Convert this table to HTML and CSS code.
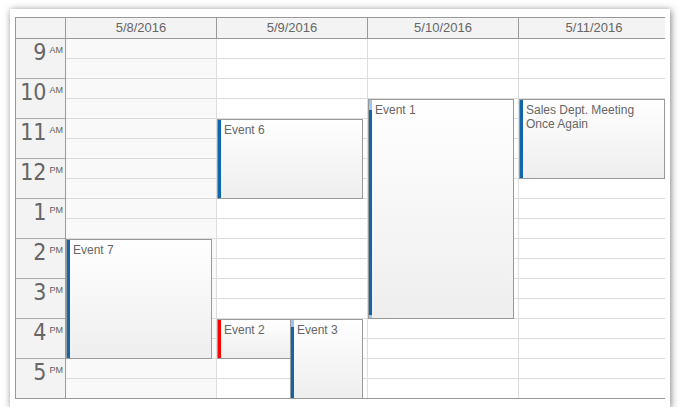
FILE: index.html
```html
<!DOCTYPE html>
<html>
<head>
<meta charset="utf-8">
<link rel="stylesheet" href="styles.css">
</head>
<body>
<div class="card">
  <div class="cal">
    <div class="head">
      <div class="corner"></div>
      <div class="dh">5/8/2016</div>
      <div class="dh">5/9/2016</div>
      <div class="dh">5/10/2016</div>
      <div class="dh">5/11/2016</div>
    </div>
    <div class="body">
      <div class="times">
        <div class="hour"><span class="num">9</span><span class="ap">AM</span></div>
        <div class="hour"><span class="num">10</span><span class="ap">AM</span></div>
        <div class="hour"><span class="num">11</span><span class="ap">AM</span></div>
        <div class="hour"><span class="num">12</span><span class="ap">PM</span></div>
        <div class="hour"><span class="num">1</span><span class="ap">PM</span></div>
        <div class="hour"><span class="num">2</span><span class="ap">PM</span></div>
        <div class="hour"><span class="num">3</span><span class="ap">PM</span></div>
        <div class="hour"><span class="num">4</span><span class="ap">PM</span></div>
        <div class="hour"><span class="num">5</span><span class="ap">PM</span></div>
      </div>
      <div class="col weekend">
        <div class="slot"></div><div class="slot"></div><div class="slot"></div><div class="slot"></div><div class="slot"></div><div class="slot"></div>
        <div class="slot"></div><div class="slot"></div><div class="slot"></div><div class="slot"></div><div class="slot"></div><div class="slot"></div>
        <div class="slot"></div><div class="slot"></div><div class="slot"></div><div class="slot"></div><div class="slot"></div><div class="slot"></div>
      </div>
      <div class="col">
        <div class="slot"></div><div class="slot"></div><div class="slot"></div><div class="slot"></div><div class="slot"></div><div class="slot"></div>
        <div class="slot"></div><div class="slot"></div><div class="slot"></div><div class="slot"></div><div class="slot"></div><div class="slot"></div>
        <div class="slot"></div><div class="slot"></div><div class="slot"></div><div class="slot"></div><div class="slot"></div><div class="slot"></div>
      </div>
      <div class="col">
        <div class="slot"></div><div class="slot"></div><div class="slot"></div><div class="slot"></div><div class="slot"></div><div class="slot"></div>
        <div class="slot"></div><div class="slot"></div><div class="slot"></div><div class="slot"></div><div class="slot"></div><div class="slot"></div>
        <div class="slot"></div><div class="slot"></div><div class="slot"></div><div class="slot"></div><div class="slot"></div><div class="slot"></div>
      </div>
      <div class="col">
        <div class="slot"></div><div class="slot"></div><div class="slot"></div><div class="slot"></div><div class="slot"></div><div class="slot"></div>
        <div class="slot"></div><div class="slot"></div><div class="slot"></div><div class="slot"></div><div class="slot"></div><div class="slot"></div>
        <div class="slot"></div><div class="slot"></div><div class="slot"></div><div class="slot"></div><div class="slot"></div><div class="slot"></div>
      </div>

      <div class="events">
        <div class="event" style="left:50px;top:200px;width:146px;height:120px">
          <div class="bar"><div class="dur" style="top:0;bottom:0"></div></div>
          <div class="etext">Event 7</div>
        </div>
        <div class="event" style="left:201px;top:80px;width:146px;height:80px">
          <div class="bar"><div class="dur" style="top:0;bottom:0"></div></div>
          <div class="etext">Event 6</div>
        </div>
        <div class="event" style="left:201px;top:280px;width:74px;height:40px">
          <div class="bar"><div class="dur red" style="top:0;bottom:0"></div></div>
          <div class="etext">Event 2</div>
        </div>
        <div class="event" style="left:274px;top:280px;width:73px;height:80px">
          <div class="bar"><div class="dur" style="top:8px;bottom:0"></div></div>
          <div class="etext">Event 3</div>
        </div>
        <div class="event" style="left:352px;top:60px;width:146px;height:220px">
          <div class="bar"><div class="dur" style="top:11px;bottom:4px"></div></div>
          <div class="etext">Event 1</div>
        </div>
        <div class="event" style="left:503px;top:60px;width:146px;height:80px">
          <div class="bar"><div class="dur" style="top:0;bottom:0"></div></div>
          <div class="etext">Sales Dept. Meeting Once Again</div>
        </div>
      </div>
    </div>
  </div>
</div>
</body>
</html>
```

FILE: styles.css
```css
html, body {
  margin: 0;
  padding: 0;
  background: #ffffff;
}

body {
  font-family: "Liberation Sans", Arial, sans-serif;
  color: #666666;
}

.card {
  margin: 9px 0 0 10px;
  width: 660px;
  box-sizing: border-box;
  padding: 8px 5px;
  background: #ffffff;
  box-shadow: 1px 1px 7px rgba(0, 0, 0, 0.5);
}

.cal {
  width: 650px;
  box-sizing: border-box;
  border: 1px solid #999999;
  border-right: none;
  overflow: hidden;
}

.head {
  display: flex;
  width: max-content;
  height: 21px;
  box-sizing: border-box;
  border-bottom: 1px solid #999999;
  background: #f3f3f3;
}

.corner {
  width: 50px;
  box-sizing: border-box;
  border-right: 1px solid #999999;
  flex-shrink: 0;
}

.dh {
  width: 151px;
  box-sizing: border-box;
  border-right: 1px solid #999999;
  flex-shrink: 0;
  text-align: center;
  font-size: 13px;
  line-height: 20px;
  color: #666666;
}

.body {
  position: relative;
  display: flex;
  width: max-content;
}

.times {
  width: 50px;
  box-sizing: border-box;
  border-right: 1px solid #999999;
  background: #f3f3f3;
  flex-shrink: 0;
}

.hour {
  height: 40px;
  box-sizing: border-box;
  border-bottom: 1px solid #aaaaaa;
  display: flex;
  justify-content: flex-end;
  align-items: flex-start;
  padding: 2px 2px 0 0;
}

.hour:last-child {
  border-bottom: none;
  height: 39px;
}

.num {
  font-family: "Liberation Sans Narrow", "DejaVu Sans Condensed", sans-serif;
  font-size: 23px;
  line-height: 23px;
  color: #666666;
}

.ap {
  font-family: "Liberation Sans", Arial, sans-serif;
  font-size: 9px;
  line-height: 9px;
  margin: 5px 0 0 3px;
  color: #5e5e5e;
}

.col {
  width: 151px;
  box-sizing: border-box;
  border-right: 1px solid #dddddd;
  flex-shrink: 0;
  background: #ffffff;
}

.col.weekend {
  background: #f9f9f9;
}

.slot {
  height: 20px;
  box-sizing: border-box;
  border-bottom: 1px solid #dddddd;
}

.slot:last-child {
  border-bottom: none;
  height: 19px;
}

.events {
  position: absolute;
  inset: 0;
}

.event {
  position: absolute;
  box-sizing: border-box;
  border: 1px solid #999999;
  background: linear-gradient(to bottom, #ffffff, #eeeeee);
  padding: 3px 4px 0 6px;
  overflow: hidden;
}

.bar {
  position: absolute;
  left: -1px;
  top: -1px;
  bottom: -1px;
  width: 4px;
  background: #9dc5e6;
}

.dur {
  position: absolute;
  left: 0;
  right: 0;
  background: #1066a8;
}

.dur.red {
  background: #ff0000;
}

.etext {
  font-size: 12px;
  line-height: 14px;
  color: #666666;
}
```
